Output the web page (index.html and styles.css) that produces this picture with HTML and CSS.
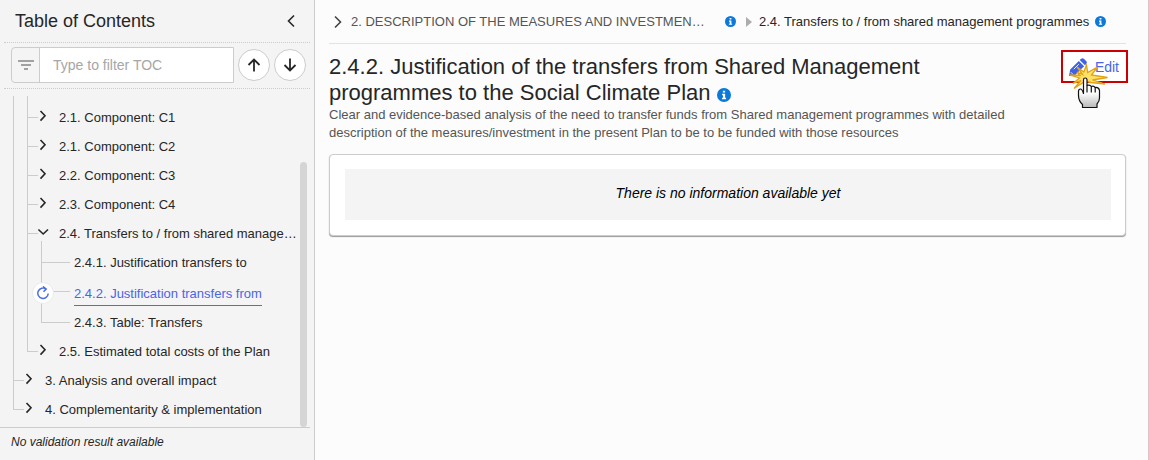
FILE: index.html
```html
<!DOCTYPE html>
<html lang="en">

<head>
    <meta charset="utf-8">
    <meta name="viewport" content="width=device-width, initial-scale=1.0">
    <title>Social Climate Plan</title>
    <link rel="stylesheet" href="styles.css">
</head>

<body>
    <!-- shared icons -->
    <svg class="sprite" aria-hidden="true">
        <symbol id="chevron" viewBox="0 0 8 12">
            <path d="M1.500 1L6 5.800l-4.500 4.800" fill="none" stroke="currentColor" stroke-width="1.600" />
        </symbol>
        <symbol id="info" viewBox="0 0 16 16">
            <circle cx="8" cy="8" r="8" fill="#0b79d9" />
            <path d="M6.700 3h2.600v2.200H6.700zM5.800 6.600h3.500v4.600h1.100v1.600H5.700v-1.600h1.200V8.200H5.800z" fill="#fff" />
        </symbol>
    </svg>

    <aside class="sidebar">
        <header class="sidebar-header">
            <h2>Table of Contents</h2>
            <button class="plain" aria-label="Collapse">
                <svg class="back" viewBox="0 0 8 14"><path d="M7 1.500L1.500 7 7 12.500" fill="none" stroke="currentColor" stroke-width="1.600" /></svg>
            </button>
        </header>

        <div class="filter">
            <div class="filter-field">
                <label for="toc" aria-label="Filter">
                    <svg width="18" height="12" viewBox="0 0 18 12"><path d="M1 2h16M4 6h10M7 10h4" fill="none" stroke="#858585" stroke-width="1.600" /></svg>
                </label>
                <input id="toc" type="text" placeholder="Type to filter TOC">
            </div>
            <button class="round" aria-label="Previous">
                <svg width="14" height="14" viewBox="0 0 14 14"><path d="M7 13.500V2M1.500 7L7 1.500 12.500 7" /></svg>
            </button>
            <button class="round" aria-label="Next">
                <svg width="14" height="14" viewBox="0 0 14 14"><path d="M7 .5V12M1.500 7L7 12.500 12.500 7" /></svg>
            </button>
        </div>

        <nav class="toc">
            <ul class="tree">
                <li class="scrolled">
                    <ul>
                        <li><div class="row"><button class="plain" aria-label="Expand"><svg class="chevron"><use href="#chevron" /></svg></button><a href="#">2.1. Component: C1</a></div></li>
                        <li><div class="row"><button class="plain" aria-label="Expand"><svg class="chevron"><use href="#chevron" /></svg></button><a href="#">2.1. Component: C2</a></div></li>
                        <li><div class="row"><button class="plain" aria-label="Expand"><svg class="chevron"><use href="#chevron" /></svg></button><a href="#">2.2. Component: C3</a></div></li>
                        <li><div class="row"><button class="plain" aria-label="Expand"><svg class="chevron"><use href="#chevron" /></svg></button><a href="#">2.3. Component: C4</a></div></li>
                        <li>
                            <div class="row"><button class="plain" aria-label="Collapse"><svg class="chevron open"><use href="#chevron" /></svg></button><a href="#">2.4. Transfers to / from shared manage…</a></div>
                            <ul class="leaves">
                                <li><div class="row"><a href="#">2.4.1. Justification transfers to</a></div></li>
                                <li>
                                    <div class="row current">
                                        <span class="status"><svg width="14" height="14" viewBox="0 0 14 14"><path d="M10 3A5.200 5.200 0 1 0 12.200 7.500M7 .5L10.200 3 7.500 5.800" fill="none" stroke="#4a6ee8" stroke-width="1.500" /></svg></span>
                                        <a href="#">2.4.2. Justification transfers from</a>
                                    </div>
                                </li>
                                <li><div class="row"><a href="#">2.4.3. Table: Transfers</a></div></li>
                            </ul>
                        </li>
                        <li><div class="row"><button class="plain" aria-label="Expand"><svg class="chevron"><use href="#chevron" /></svg></button><a href="#">2.5. Estimated total costs of the Plan</a></div></li>
                    </ul>
                </li>
                <li><div class="row"><button class="plain" aria-label="Expand"><svg class="chevron"><use href="#chevron" /></svg></button><a href="#">3. Analysis and overall impact</a></div></li>
                <li><div class="row"><button class="plain" aria-label="Expand"><svg class="chevron"><use href="#chevron" /></svg></button><a href="#">4. Complementarity &amp; implementation</a></div></li>
            </ul>
            <div class="thumb"></div>
        </nav>

        <footer class="validation">No validation result available</footer>
    </aside>

    <main>
        <nav class="breadcrumb">
            <svg class="crumb-chevron" viewBox="0 0 8 14"><path d="M1 1.500L6.500 7 1 12.500" fill="none" stroke="#444" stroke-width="1.600" /></svg>
            <a href="#" class="root">2. DESCRIPTION OF THE MEASURES AND INVESTMEN…</a>
            <svg class="info"><use href="#info" /></svg>
            <svg class="separator" viewBox="0 0 6 10"><path d="M0 0l6 5-6 5z" fill="#adadad" /></svg>
            <a href="#">2.4. Transfers to / from shared management programmes</a>
            <svg class="info"><use href="#info" /></svg>
        </nav>

        <section class="intro">
            <div class="intro-text">
                <h1>2.4.2. Justification of the transfers from Shared Management programmes to the Social Climate Plan <svg class="info large"><use href="#info" /></svg></h1>
                <p>Clear and evidence-based analysis of the need to transfer funds from Shared management programmes with detailed description of the measures/investment in the present Plan to be to be funded with those resources</p>
            </div>
            <button class="edit">
                <svg class="pencil" viewBox="0 0 18 18">
                    <path d="M0 18l1.200-6.500L9.800 2.900l5.300 5.300L6.500 16.800zM10.700 2l1.500-1.300q1.500-1.200 2.900.2l2 2q1.400 1.400.2 2.900L16 7.300z" fill="#3f62e6" />
                    <path d="M4.800 11.200l5-5M1.800 14.200l2 2" stroke="#fff" stroke-width=".9" />
                </svg>
                Edit
                <svg class="pointer" viewBox="0 0 38 48">
                    <defs>
                        <linearGradient id="palm" x1="0" y1="0" x2="0" y2="1">
                            <stop offset=".5" stop-color="#fff" />
                            <stop offset="1" stop-color="#b8b8b8" />
                        </linearGradient>
                    </defs>
                    <path d="M12.500 10.500L7 3l6.800 5L16.500 1l1.200 7.500L27.500 3l-6 8 16 2.500-15 2.500L35 20l-14-1.500-5.500-1.500L4 24.500l7-8L3 19.500l6.500-5.500L0 11l10 .5L7 8z" fill="#ffe066" stroke="#e0a414" stroke-width="1.300" />
                    <path d="M13.500 29.500V15.800q0-1.800 1.700-1.800t1.800 1.800v5.700q3-1 4.300 1 2.700-1 3.700 1 4-.5 4.500 3V34q0 3.500-2.500 6v3.500H12.500V40.500Q8.500 37 8.500 31.500v-4q0-2.500 2-2.500 1.500 0 3 4.500z" fill="url(#palm)" stroke="#111" stroke-width="1.200" stroke-linejoin="round" />
                    <path d="M17 21.500v7M21.300 22.500v6M25.200 23.500v5" fill="none" stroke="#111" stroke-width="1.200" />
                </svg>
            </button>
        </section>

        <section class="card">
            <p class="empty">There is no information available yet</p>
        </section>
    </main>
</body>

</html>
```
FILE: styles.css
```css
* {
    box-sizing: border-box;
}

body {
    margin: 0;
    min-height: 100vh;
    display: flex;
    background-color: #fcfcfc;
    color: #262626;
    font-family: "Liberation Sans", Arial, sans-serif;
    font-size: 13px;
}

h1, h2, p, ul {
    margin: 0;
    padding: 0;
    font-weight: 400;
}

ul {
    list-style: none;
}

a {
    color: inherit;
    text-decoration: none;
}

svg {
    display: block;
    flex: none;
}

button {
    font-family: inherit;
    color: inherit;
    padding: 0;
    cursor: pointer;
}

.sprite {
    display: none;
}

.plain {
    background: none;
    border: none;
}

/* sidebar */
.sidebar {
    flex: none;
    width: 315px;
    padding-right: 4px;
    display: flex;
    flex-direction: column;
    background-color: #f4f4f4;
    border-right: 1px solid #ccc;
}

.sidebar-header {
    display: flex;
    justify-content: space-between;
    align-items: center;
    height: 43px;
    margin-left: 4px;
    padding: 0 15px 0 11px;
    border-bottom: 1px dotted #ccc;
}

.sidebar-header h2 {
    font-size: 18px;
}

.back {
    width: 8px;
    height: 14px;
}

.filter {
    display: flex;
    align-items: center;
    gap: 4px;
    height: 46px;
    margin-left: 4px;
    padding: 0 4px 2px 7px;
    border-bottom: 1px dotted #ccc;
}

.filter-field {
    flex: 1;
    min-width: 0;
    height: 36px;
    display: flex;
    border: 1px solid #ccc;
    border-radius: 4px 0 0 4px;
}

.filter-field label {
    width: 28px;
    display: flex;
    align-items: center;
    justify-content: center;
    border-right: 1px solid #ccc;
}

.filter-field input {
    flex: 1;
    min-width: 0;
    border: none;
    padding: 0 13px;
    background-color: #fff;
    font-family: inherit;
    font-size: 14px;
}

.filter-field input::placeholder {
    color: #a6a6a6;
}

.round {
    width: 32px;
    height: 32px;
    display: flex;
    align-items: center;
    justify-content: center;
    background-color: #fff;
    border: 1px solid #ccc;
    border-radius: 50%;
}

.round path {
    fill: none;
    stroke: #262626;
    stroke-width: 1.8;
}

/* tree */
.toc {
    flex: 1;
    display: flex;
    padding-left: 13px;
    border-bottom: 1px solid #ccc;
}

.tree {
    flex: 1;
    min-width: 0;
    padding: 7px 0 3px;
}

/* the two gradients are the vertical line and the short branch */
.tree li {
    padding-left: 8px;
    background-image: linear-gradient(#ccc, #ccc), linear-gradient(#ccc, #ccc);
    background-repeat: no-repeat;
    background-size: 1px 100%, 11px 1px;
    background-position: 0 0, 0 14px;
}

.tree li:last-child {
    background-size: 1px 14px, 11px 1px;
}

.tree li.scrolled {
    padding-top: 7px;
    background-size: 1px 100%, 0 0;
}

.tree ul {
    margin-left: 6px;
}

.tree ul > li:first-child {
    margin-top: -7px;
    padding-top: 7px;
    background-position: 0 0, 0 21px;
}

.row {
    height: 29px;
    display: flex;
    align-items: center;
}

.row .plain {
    flex: none;
    width: 16px;
    height: 16px;
    margin-right: 8px;
    display: flex;
    justify-content: center;
}

.row a {
    white-space: nowrap;
}

.chevron {
    width: 8px;
    height: 12px;
}

.open {
    transform: rotate(90deg);
}

.tree .leaves > li {
    padding-left: 33px;
    background-size: 1px 100%, 29px 1px;
}

.tree .leaves > li:last-child {
    background-size: 1px 14px, 29px 1px;
}

.current {
    height: 31px;
    color: #4a64e8;
}

.current a {
    padding-top: 3px;
    line-height: 22px;
    border-bottom: 1px solid #4a6ee8;
}

.status {
    width: 22px;
    height: 22px;
    flex: none;
    display: flex;
    align-items: center;
    justify-content: center;
    margin-left: -42px;
    margin-right: 20px;
    border: 1px solid #ebebeb;
    border-radius: 50%;
    background-color: #fff;
}

.thumb {
    width: 7px;
    margin: 73px 3px 0 1px;
    background-color: #d5d5d5;
    border-radius: 4px;
}

.validation {
    height: 32px;
    padding: 7px 11px;
    font-size: 12px;
    font-style: italic;
}

/* content */
main {
    flex: 1;
    min-width: 0;
    padding: 0 22px 0 14px;
    border-right: 1px solid #ccc;
}

.breadcrumb {
    display: flex;
    align-items: center;
    height: 44px;
    border-bottom: 1px solid #e3e3e3;
}

.breadcrumb a {
    white-space: nowrap;
}

.breadcrumb .root {
    width: 368px;
    color: #555;
}

.crumb-chevron {
    width: 8px;
    height: 14px;
    margin: 0 9px 0 5px;
}

.info {
    width: 11px;
    height: 11px;
    margin: 0 10px 0 6px;
}

.large {
    display: inline-block;
    width: 14px;
    height: 14px;
    margin: 0;
    vertical-align: -2px;
}

.separator {
    width: 6px;
    height: 10px;
    margin-right: 7px;
}

.intro {
    display: flex;
    justify-content: space-between;
    align-items: flex-start;
    gap: 40px;
    padding-top: 10px;
}

.intro h1 {
    font-size: 22px;
    line-height: 26px;
}

.intro p {
    color: #555;
    font-size: 13px;
    line-height: 18px;
}

.edit {
    position: relative;
    flex: none;
    display: flex;
    align-items: center;
    gap: 8px;
    height: 33px;
    margin: -4px -2px 0 0;
    padding: 0 7px 0 6px;
    border: 2px solid #c00;
    background-color: #fff;
    color: #4a64e8;
    font-size: 14px;
}

.pencil {
    width: 18px;
    height: 18px;
}

.pointer {
    position: absolute;
    left: 7px;
    top: 12px;
    width: 38px;
    height: 48px;
}

.card {
    margin-top: 12px;
    padding: 14px 14px 15px 15px;
    background-color: #fff;
    border: 1px solid #ccc;
    border-radius: 4px;
    box-shadow: 0 1px 1px #999;
}

.empty {
    padding: 15px 16px 17px;
    background-color: #f4f4f4;
    color: #000;
    font-size: 14px;
    line-height: 19px;
    font-style: italic;
    text-align: center;
}
```
